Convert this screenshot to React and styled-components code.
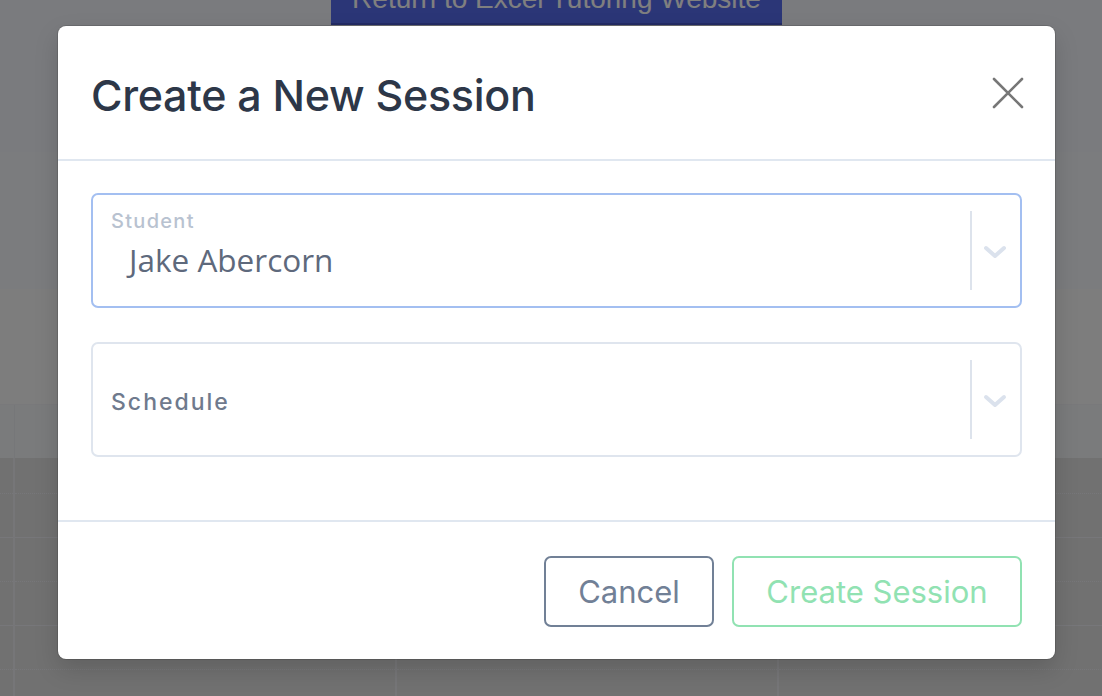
import React from "react";
import styled, { createGlobalStyle } from "styled-components";

const GlobalStyle = createGlobalStyle`
    html, body {
        margin: 0;
        padding: 0;
        height: 100%;
        overflow: hidden;
    }

    body {
        font-family: Inter, "Noto Sans", "Liberation Sans", sans-serif;
        background-color: #e3e3e3;
    }
`;

const Page = styled.div`
    position: relative;
    width: 100%;
    height: 696px;
    overflow: hidden;
`;

const TopBar = styled.header`
    height: 152px;
    display: flex;
    justify-content: center;
    align-items: flex-start;
    padding-left: 11px;
    background-color: #f4f6fd;
`;

const ReturnButton = styled.a`
    display: flex;
    align-items: center;
    justify-content: center;
    margin-top: -20px;
    width: 451px;
    height: 45px;
    box-sizing: border-box;
    padding-bottom: 6px;
    border-bottom: 2px solid #4657c9;
    background-color: #576def;
    color: #fff;
    font-family: "Liberation Sans", Arial, sans-serif;
    font-size: 28px;
    line-height: 1;
    text-decoration: none;
`;

const Band = styled.div`
    height: ${props => props.height}px;
    background-color: ${props => props.color};
`;

const TableHead = styled.div`
    height: 53px;
    border-top: 1px solid #f2f3f7;
    background-color: #f5f6f9;
    display: grid;
    grid-template-columns: 15px repeat(3, 382px) 1fr;
`;

const HeadCell = styled.div`
    border-right: 1px solid #eceef3;

    &:last-child {
        border-right: 0;
    }
`;

const Grid = styled.div`
    display: grid;
    grid-template-columns: 15px repeat(3, 382px) 1fr;
    background-color: #e3e3e3;
`;

const Column = styled.div`
    border-right: 2px solid #ececf1;

    &:last-child {
        border-right: 0;
    }
`;

const Slot = styled.div`
    height: ${props => props.first ? 35 : 43}px;
    border-bottom: 1px ${props => props.dotted ? "dotted" : "solid"} #efeff4;
`;

const Overlay = styled.div`
    position: absolute;
    inset: 0;
    background-color: rgba(0, 0, 0, 0.5);
    padding: 26px 47px 0 58px;
`;

const Modal = styled.div`
    width: 997px;
    height: 633px;
    box-sizing: border-box;
    display: flex;
    flex-direction: column;
    background-color: #fff;
    border-radius: 8px;
    box-shadow: 0 0 0 1px rgba(0, 0, 0, 0.12), 0 10px 25px rgba(0, 0, 0, 0.15);
    overflow: hidden;
`;

const ModalHeader = styled.div`
    height: 135px;
    box-sizing: border-box;
    display: flex;
    align-items: center;
    justify-content: space-between;
    padding: 4px 31px 0 33px;
    border-bottom: 2px solid #e0e7f0;
`;

const Title = styled.h2`
    margin: 0;
    font-size: 43px;
    font-weight: 500;
    letter-spacing: -0.3px;
    color: #2d3748;
`;

const CloseButton = styled.button`
    display: flex;
    padding: 0;
    margin-top: -4px;
    border: 0;
    background: none;
    cursor: pointer;
`;

const ModalBody = styled.div`
    flex: 1;
    display: flex;
    flex-direction: column;
    gap: 34px;
    padding: 32px 33px 0;
    border-bottom: 2px solid #e0e7f0;
`;

const Select = styled.div`
    height: 115px;
    box-sizing: border-box;
    display: flex;
    align-items: center;
    border: 2px solid ${props => props.focused ? "#a3bff1" : "#dfe5ee"};
    border-radius: 7px;
    background-color: #fff;
`;

const SelectValue = styled.div`
    flex: 1;
    display: flex;
    flex-direction: column;
    padding-left: 18px;
`;

const FloatLabel = styled.span`
    font-size: 20px;
    font-weight: 500;
    letter-spacing: 1.3px;
    color: #b8c2d0;
    margin-top: -12px;
`;

const Value = styled.span`
    margin-top: 5px;
    padding-left: 18px;
    font-family: "Open Sans", "Noto Sans", sans-serif;
    font-size: 31.5px;
    color: #5e697c;
`;

const Placeholder = styled.span`
    margin-top: 4px;
    font-size: 23px;
    font-weight: 500;
    letter-spacing: 2px;
    color: #6f7a8d;
`;

const Indicators = styled.div`
    align-self: stretch;
    display: flex;
    align-items: center;
    padding: 16px 0;
`;

const Separator = styled.span`
    align-self: stretch;
    width: 2px;
    background-color: #dde3ec;
`;

const Chevron = styled.span`
    display: flex;
    padding: 2px 13px 0 11px;
`;

const ModalFooter = styled.div`
    height: 137px;
    box-sizing: border-box;
    display: flex;
    justify-content: flex-end;
    align-items: center;
    gap: 18px;
    padding: 1px 33px 0;
`;

const Button = styled.button`
    height: 71px;
    width: ${props => props.width}px;
    box-sizing: border-box;
    border: 2px solid ${props => props.color};
    border-radius: 7px;
    background-color: #fff;
    color: ${props => props.color};
    font-family: Inter, "Noto Sans", sans-serif;
    font-size: 31px;
    cursor: pointer;
`;

const ChevronIcon = () => (
    <svg width="24" height="14" viewBox="0 0 24 14">
        <path d="M3 3 L12 11 L21 3" fill="none" stroke="#dbe2ed" strokeWidth="4" strokeLinecap="round" strokeLinejoin="round" />
    </svg>
);

const CloseIcon = () => (
    <svg width="32" height="32" viewBox="0 0 32 32">
        <path d="M2 2 L30 30 M30 2 L2 30" stroke="#777" strokeWidth="2.6" strokeLinecap="round" />
    </svg>
);

const slots = [true, false, true, false, true, false];

class App extends React.Component {
    render() {
        return (
            <>
                <GlobalStyle />
                <Page>
                    <TopBar>
                        <ReturnButton href="#">Return to Excel Tutoring Website</ReturnButton>
                    </TopBar>
                    <Band height={137} color="#f7f8fd" />
                    <Band height={115} color="#fafafb" />
                    <TableHead>
                        <HeadCell /><HeadCell /><HeadCell /><HeadCell /><HeadCell />
                    </TableHead>
                    <Grid>
                        {[0, 1, 2, 3, 4].map(col => (
                            <Column key={col}>
                                {slots.map((dotted, i) => (
                                    <Slot key={i} dotted={dotted} first={i === 0} />
                                ))}
                            </Column>
                        ))}
                    </Grid>
                    <Overlay>
                        <Modal>
                            <ModalHeader>
                                <Title>Create a New Session</Title>
                                <CloseButton aria-label="Close"><CloseIcon /></CloseButton>
                            </ModalHeader>
                            <ModalBody>
                                <Select focused>
                                    <SelectValue>
                                        <FloatLabel>Student</FloatLabel>
                                        <Value>Jake Abercorn</Value>
                                    </SelectValue>
                                    <Indicators>
                                        <Separator />
                                        <Chevron><ChevronIcon /></Chevron>
                                    </Indicators>
                                </Select>
                                <Select>
                                    <SelectValue>
                                        <Placeholder>Schedule</Placeholder>
                                    </SelectValue>
                                    <Indicators>
                                        <Separator />
                                        <Chevron><ChevronIcon /></Chevron>
                                    </Indicators>
                                </Select>
                            </ModalBody>
                            <ModalFooter>
                                <Button width={170} color="#718096">Cancel</Button>
                                <Button width={290} color="#91e2b2">Create Session</Button>
                            </ModalFooter>
                        </Modal>
                    </Overlay>
                </Page>
            </>
        );
    }
}

export default App;
